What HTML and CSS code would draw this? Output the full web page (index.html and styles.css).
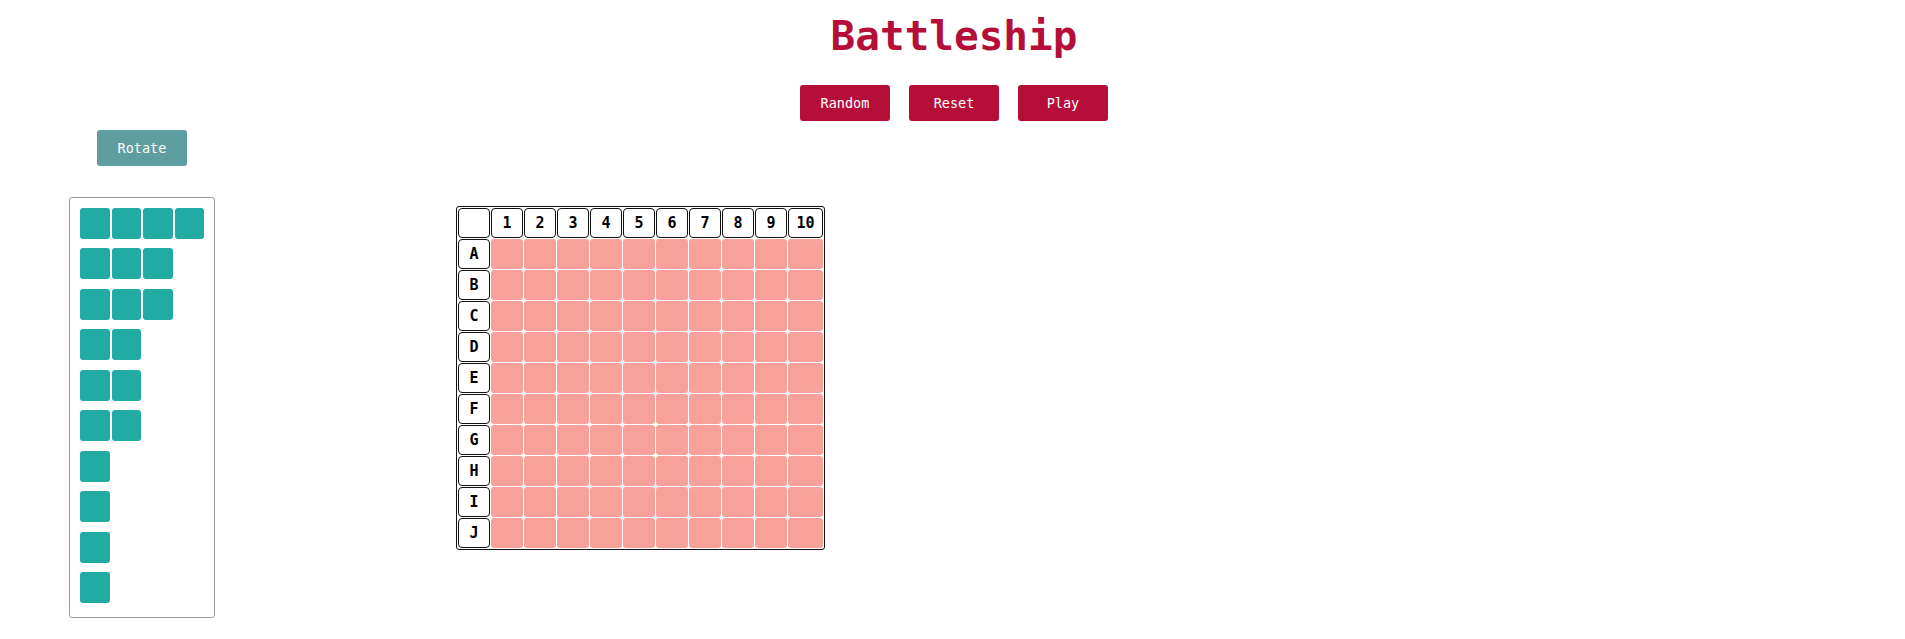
FILE: index.html
```html
<!DOCTYPE html>
<html lang="en">
<head>
<meta charset="utf-8">
<title>Battleship</title>
<link rel="stylesheet" href="styles.css">
</head>
<body>
<header class="top">
  <h1 class="title">Battleship</h1>
  <div class="controls">
    <button class="btn btn-primary">Random</button>
    <button class="btn btn-primary">Reset</button>
    <button class="btn btn-primary">Play</button>
  </div>
</header>
<main class="game">
  <aside class="dock">
    <button class="btn btn-rotate">Rotate</button>
    <div class="fleet">
      <div class="ship"><span class="part"></span><span class="part"></span><span class="part"></span><span class="part"></span></div>
      <div class="ship"><span class="part"></span><span class="part"></span><span class="part"></span></div>
      <div class="ship"><span class="part"></span><span class="part"></span><span class="part"></span></div>
      <div class="ship"><span class="part"></span><span class="part"></span></div>
      <div class="ship"><span class="part"></span><span class="part"></span></div>
      <div class="ship"><span class="part"></span><span class="part"></span></div>
      <div class="ship"><span class="part"></span></div>
      <div class="ship"><span class="part"></span></div>
      <div class="ship"><span class="part"></span></div>
      <div class="ship"><span class="part"></span></div>
    </div>
  </aside>
  <section class="board">
    <table class="grid">
      <thead>
        <tr><th></th><th>1</th><th>2</th><th>3</th><th>4</th><th>5</th><th>6</th><th>7</th><th>8</th><th>9</th><th class="wide">10</th></tr>
      </thead>
      <tbody>
        <tr><th>A</th><td></td><td></td><td></td><td></td><td></td><td></td><td></td><td></td><td></td><td></td></tr>
        <tr><th>B</th><td></td><td></td><td></td><td></td><td></td><td></td><td></td><td></td><td></td><td></td></tr>
        <tr><th>C</th><td></td><td></td><td></td><td></td><td></td><td></td><td></td><td></td><td></td><td></td></tr>
        <tr><th>D</th><td></td><td></td><td></td><td></td><td></td><td></td><td></td><td></td><td></td><td></td></tr>
        <tr><th>E</th><td></td><td></td><td></td><td></td><td></td><td></td><td></td><td></td><td></td><td></td></tr>
        <tr><th>F</th><td></td><td></td><td></td><td></td><td></td><td></td><td></td><td></td><td></td><td></td></tr>
        <tr><th>G</th><td></td><td></td><td></td><td></td><td></td><td></td><td></td><td></td><td></td><td></td></tr>
        <tr><th>H</th><td></td><td></td><td></td><td></td><td></td><td></td><td></td><td></td><td></td><td></td></tr>
        <tr><th>I</th><td></td><td></td><td></td><td></td><td></td><td></td><td></td><td></td><td></td><td></td></tr>
        <tr><th>J</th><td></td><td></td><td></td><td></td><td></td><td></td><td></td><td></td><td></td><td></td></tr>
      </tbody>
    </table>
  </section>
</main>
</body>
</html>
```
FILE: styles.css
```css
* { box-sizing: border-box; }

body {
  margin: 0;
  background: #ffffff;
  font-family: "DejaVu Sans Mono", "Liberation Mono", monospace;
  color: #000;
}

.top {
  display: flex;
  flex-direction: column;
  align-items: center;
  padding-left: 3px;
}

.title {
  margin: 12px 0 0;
  font-size: 41px;
  line-height: 48px;
  font-weight: bold;
  color: #b50f39;
}

.controls {
  display: flex;
  gap: 19px;
  margin-top: 25px;
}

.btn {
  width: 90px;
  height: 36px;
  border: none;
  border-radius: 3px;
  color: #ffffff;
  font-family: "DejaVu Sans Mono", "Liberation Mono", monospace;
  font-size: 13.5px;
  padding: 0;
  cursor: pointer;
}

.btn-primary { background: #b50f39; }
.btn-rotate { background: #5f9ea0; }

.game {
  display: flex;
  align-items: flex-start;
  gap: 241px;
  margin-top: 9px;
  padding-left: 69px;
}

.dock {
  width: 146px;
  display: flex;
  flex-direction: column;
  align-items: center;
  gap: 31px;
}

.fleet {
  width: 146px;
  border: 1px solid #9a9a9a;
  border-radius: 3px;
  padding: 9.7px 10px 4.3px;
}

.ship {
  display: flex;
  gap: 2px;
  margin-bottom: 9.5px;
}

.part {
  width: 29.67px;
  height: 31px;
  background: #22aba2;
  border-radius: 3px;
}

.board {
  margin-top: 76px;
}

.grid {
  border: 1px solid #111;
  border-radius: 3px;
  border-spacing: 1px;
}

.grid th,
.grid td {
  width: 32px;
  height: 30px;
  padding: 0;
  border-radius: 4px;
}

.grid th {
  border: 1px solid #111;
  background: #fff;
  font-size: 15px;
  font-weight: bold;
  text-align: center;
  vertical-align: middle;
}

.grid th.wide { width: 35px; }

.grid td {
  background: #f8a19a;
  border-radius: 3px;
}
```
